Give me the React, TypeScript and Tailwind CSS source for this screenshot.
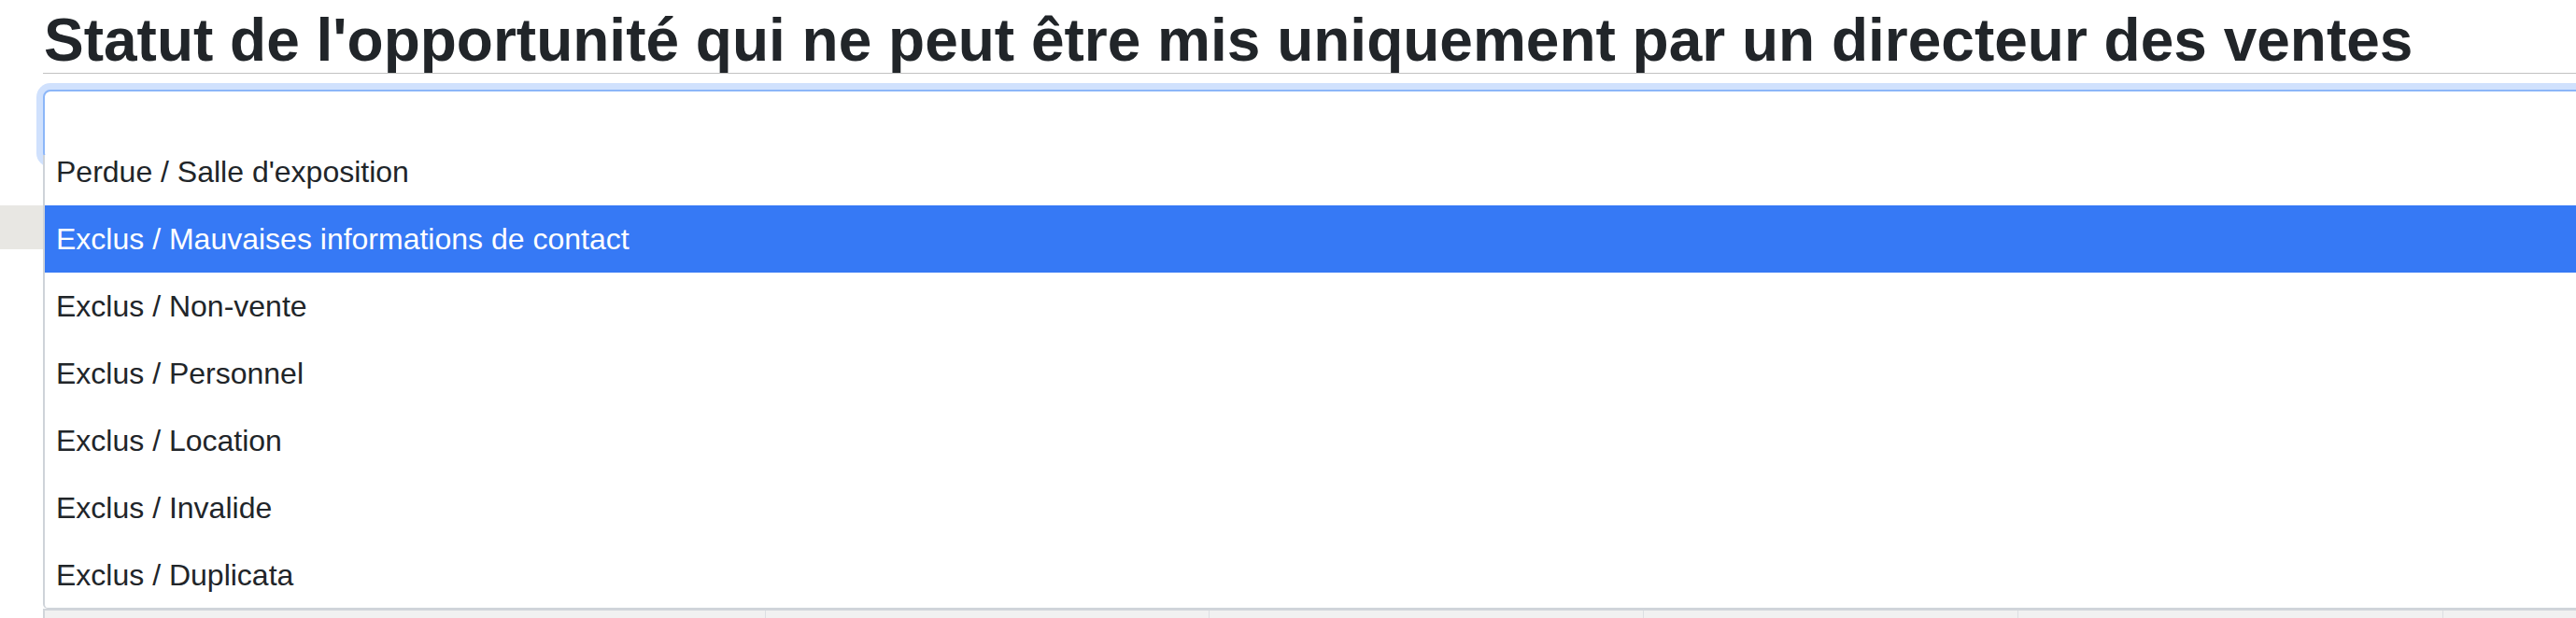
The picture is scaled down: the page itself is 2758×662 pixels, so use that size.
const options = [
  "Exclus / Mauvaises informations de contact",
  "Exclus / Non-vente",
  "Exclus / Personnel",
  "Exclus / Location",
  "Exclus / Invalide",
  "Exclus / Duplicata",
];

const selected = "Exclus / Mauvaises informations de contact";

export default function App() {
  return (
    <div className="relative h-[662px] overflow-hidden bg-white font-['Liberation_Sans',Arial,sans-serif] text-[#212529]">
      <div className="pl-[46px]">
        {/* Title */}
        <h1 className="border-b border-[#c2c2c2] pb-[3px] pl-[1px] pt-[11px] text-[64px] font-bold leading-[64px] whitespace-nowrap">
          Statut de l'opportunité qui ne peut être mis uniquement par un directeur des ventes
        </h1>

        {/* Focused select */}
        <div className="mr-[-30px] mt-[17px] h-[76px] rounded-lg border-2 border-[#8cb6f8] bg-white ring-[7px] ring-[#d0e1fd]" />

        {/* Bar behind the dropdown */}
        <div className="-ml-[46px] mt-[48px] h-[47px] bg-[#e8e7e3]" />

        {/* Table header peeking out below */}
        <div className="mr-[-30px] mt-[385px] flex h-[40px] border-l-2 border-t-2 border-[#d1d5da] bg-[#f1f1f1]">
          <div className="w-[772px] border-r border-[#dcdfe3]" />
          <div className="w-[475px] border-r border-[#dcdfe3]" />
          <div className="w-[465px] border-r border-[#dcdfe3]" />
          <div className="w-[401px] border-r border-[#dcdfe3]" />
          <div className="w-[455px] border-r border-[#dcdfe3]" />
          <div className="flex-1" />
        </div>
      </div>

      {/* Dropdown list */}
      <div className="absolute left-[46px] right-[-30px] top-[166px] h-[486px] overflow-hidden rounded-bl-[5px] border-b border-l-2 border-[#ced3d9] bg-white text-[32px]">
        <div className="h-[54px] pl-3 pt-[6px] leading-[24px]">Perdue / Salle d'exposition</div>
        {options.map((opt) => (
          <div
            key={opt}
            className={`h-[72px] pl-3 leading-[72px] ${opt === selected ? 'bg-[#3679f5] text-white' : ''}`}
          >
            {opt}
          </div>
        ))}
      </div>
    </div>
  );
}
